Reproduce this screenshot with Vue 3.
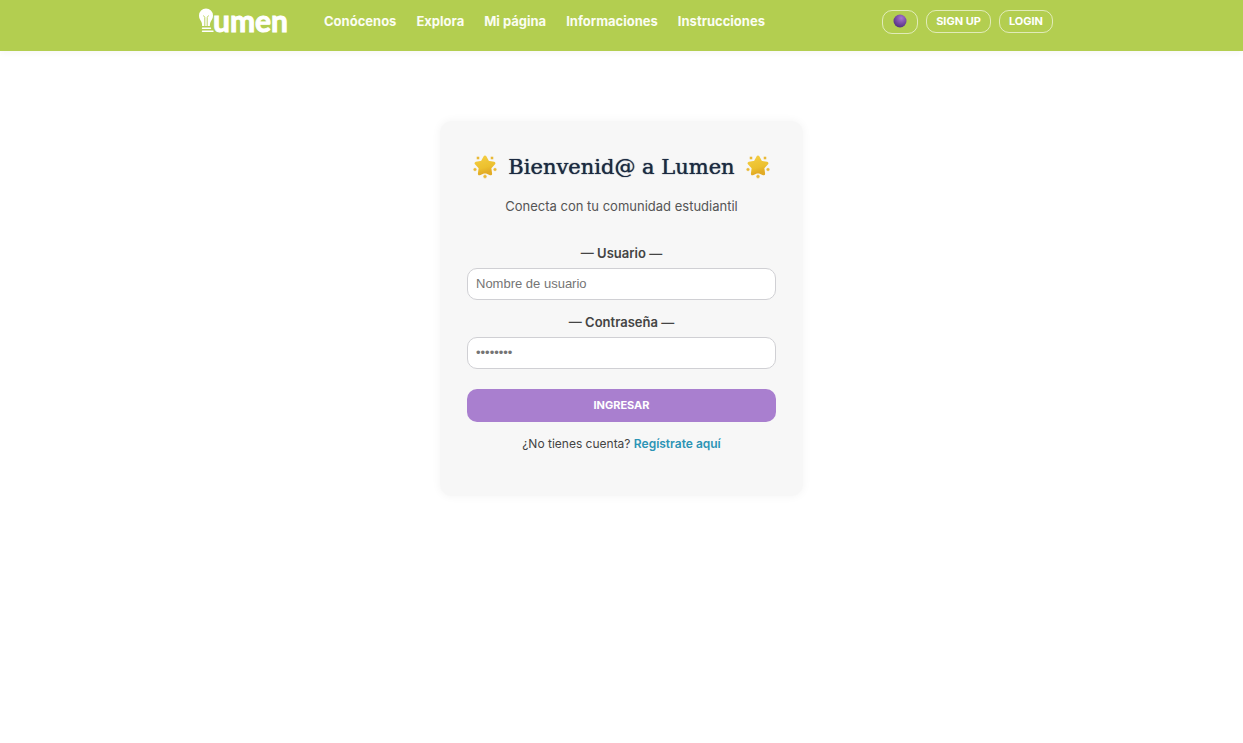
<script setup>
import { ref } from 'vue'

const links = ['Conócenos', 'Explora', 'Mi página', 'Informaciones', 'Instrucciones']
const sparks = [
  [5, 3, 1.7],
  [19, 3, 1.7],
  [2, 14.5, 1.8],
  [22, 14.5, 1.8],
  [12, 21.5, 1.9],
]
const user = ref('')
const password = ref('')
</script>

<template>
  <header class="bar">
    <div class="bar-inner">
      <a class="logo" href="#" aria-label="Lumen">
        <svg width="16" height="26" viewBox="0 0 16 26" aria-hidden="true">
          <path
            d="M8 0.500a7 7 0 0 0-7 7c0 3 1.300 4.400 2.200 6.100.7 1.200.9 2.400.9 4.400h7.800c0-2 .2-3.200.9-4.400 .9-1.700 2.200-3.100 2.200-6.100a7 7 0 0 0-7-7z"
            fill="#fff"
          />
          <path d="M6.800 18V9.500L5.500 7.500M9.200 18V9.500L10.500 7.500" fill="none" stroke="#b3ce50" stroke-width="0.9" />
          <path d="M4.500 20.300h8M4.500 23.200h10.500" fill="none" stroke="#fff" stroke-width="1.400" stroke-linecap="round" />
        </svg>
        <span class="logo-text">umen</span>
      </a>
      <nav class="nav">
        <a v-for="link in links" :key="link" href="#">{{ link }}</a>
      </nav>
      <div class="actions">
        <button class="pill theme" type="button" aria-label="Cambiar tema">
          <svg width="14" height="14" viewBox="0 0 14 14" aria-hidden="true">
            <defs>
              <radialGradient id="orb" cx="0.6" cy="0.28" r="0.75">
                <stop offset="0" stop-color="#a678cc" />
                <stop offset="0.5" stop-color="#7d4fa8" />
                <stop offset="1" stop-color="#50307c" />
              </radialGradient>
            </defs>
            <circle cx="7" cy="7" r="6.500" fill="url(#orb)" />
          </svg>
        </button>
        <a class="pill" href="#">SIGN UP</a>
        <a class="pill" href="#">LOGIN</a>
      </div>
    </div>
  </header>

  <main class="page">
    <form class="card" @submit.prevent>
      <h1 class="title">
        <svg v-for="side in 2" :key="side" class="star" :class="{ last: side === 2 }" width="24" height="24" viewBox="0 0 24 24" aria-hidden="true">
          <defs>
            <linearGradient :id="'gold' + side" x1="0" y1="0" x2="0.3" y2="1">
              <stop offset="0" stop-color="#f4cd42" />
              <stop offset="0.7" stop-color="#ecc02e" />
              <stop offset="1" stop-color="#e2ab25" />
            </linearGradient>
          </defs>
          <path
            d="M12 2l2.900 5.200 6 1.100-4.100 4.500.8 6-5.600-2.400-5.600 2.400.8-6-4.100-4.500 6-1.100z"
            :fill="'url(#gold' + side + ')'"
            :stroke="'url(#gold' + side + ')'"
            stroke-width="3"
            stroke-linejoin="round"
          />
          <circle v-for="(s, i) in sparks" :key="i" :cx="s[0]" :cy="s[1]" :r="s[2]" fill="#e9b936" stroke="#f7f7f7" stroke-width="0.5" />
        </svg>
        <span>Bienvenid@ a Lumen</span>
      </h1>
      <p class="subtitle">Conecta con tu comunidad estudiantil</p>

      <div class="field">
        <label for="user">— Usuario —</label>
        <input id="user" v-model="user" type="text" placeholder="Nombre de usuario" />
      </div>
      <div class="field">
        <label for="password">— Contraseña —</label>
        <input id="password" v-model="password" type="password" placeholder="••••••••" />
      </div>

      <button class="submit" type="submit">INGRESAR</button>
      <p class="signup">¿No tienes cuenta? <a href="#">Regístrate aquí</a></p>
    </form>
  </main>
</template>

<style>
body {
  background: #fff;
}
</style>

<style scoped>
.bar,
.page {
  font-family: Inter, 'Liberation Sans', sans-serif;
}
.bar {
  background: #b3ce50;
  box-shadow: 0 2px 6px rgba(0, 0, 0, 0.04);
  padding: 6px 0 15px;
}
.bar-inner {
  box-sizing: border-box;
  max-width: 863px;
  margin: 0 auto;
  padding-left: 8px;
  display: flex;
  align-items: center;
}
.logo {
  display: flex;
  align-items: center;
  height: 30px;
  margin-right: 36px;
  color: #fff;
  text-decoration: none;
}
.logo svg {
  margin-right: -1px;
}
.logo-text {
  padding-bottom: 3px;
  font: 700 30px/30px Lato, sans-serif;
  -webkit-text-stroke: 1px #fff;
}
.nav {
  display: flex;
  gap: 20px;
  font-size: 13px;
  font-weight: 700;
}
.nav a {
  color: #fbfdf2;
  text-decoration: none;
}
.actions {
  margin-left: auto;
  padding-top: 1px;
  display: flex;
  gap: 8px;
}
.pill {
  box-sizing: border-box;
  height: 23px;
  padding: 0 9px;
  border: 1px solid rgba(255, 255, 255, 0.6);
  border-radius: 10px;
  background: transparent;
  color: #fff;
  font-size: 11px;
  font-weight: 700;
  line-height: 21px;
  text-decoration: none;
}
.theme {
  width: 36px;
  height: 24px;
  display: flex;
  justify-content: center;
  padding-top: 3px;
}
.page {
  display: flex;
  justify-content: center;
  padding: 70px 16px;
}
.card {
  box-sizing: border-box;
  width: 100%;
  max-width: 363px;
  padding: 30px 27px 42px;
  border-radius: 12px;
  background: #f7f7f7;
  box-shadow: 0 0 10px rgba(0, 0, 0, 0.05);
  text-align: center;
}
.title {
  display: flex;
  align-items: center;
  justify-content: center;
  gap: 11px;
  margin: 0 -10px;
  color: #1b2a41;
  font: 400 21px/32px 'DejaVu Serif', serif;
  text-shadow: 0 0 1px #1b2a41;
  white-space: nowrap;
}
.last {
  order: 1;
}
.subtitle {
  margin: 13px 0 27px;
  color: #555;
  font-size: 13px;
  line-height: 20px;
}
.field {
  display: flex;
  flex-direction: column;
  gap: 5px;
  margin-bottom: 12px;
}
.field label {
  color: #444;
  font-size: 13px;
  font-weight: 600;
  line-height: 20px;
}
.field input {
  box-sizing: border-box;
  width: 100%;
  height: 32px;
  padding: 0 8px 2px;
  border: 1px solid #d0d0d4;
  border-radius: 10px;
  background: #fff;
  color: #333;
  font: 13px 'Liberation Sans', Arial, sans-serif;
}
.field input::placeholder {
  color: #757575;
}
.submit {
  width: 100%;
  height: 33px;
  margin-top: 8px;
  padding: 0 0 2px;
  border: 0;
  border-radius: 10px;
  background: #a97fcf;
  color: #fff;
  font: 700 11px Inter, sans-serif;
}
.signup {
  margin: 12px 0 0;
  color: #444;
  font-size: 12px;
  line-height: 20px;
}
.signup a {
  color: #2c94b5;
  font-weight: 600;
  text-decoration: none;
}
</style>
